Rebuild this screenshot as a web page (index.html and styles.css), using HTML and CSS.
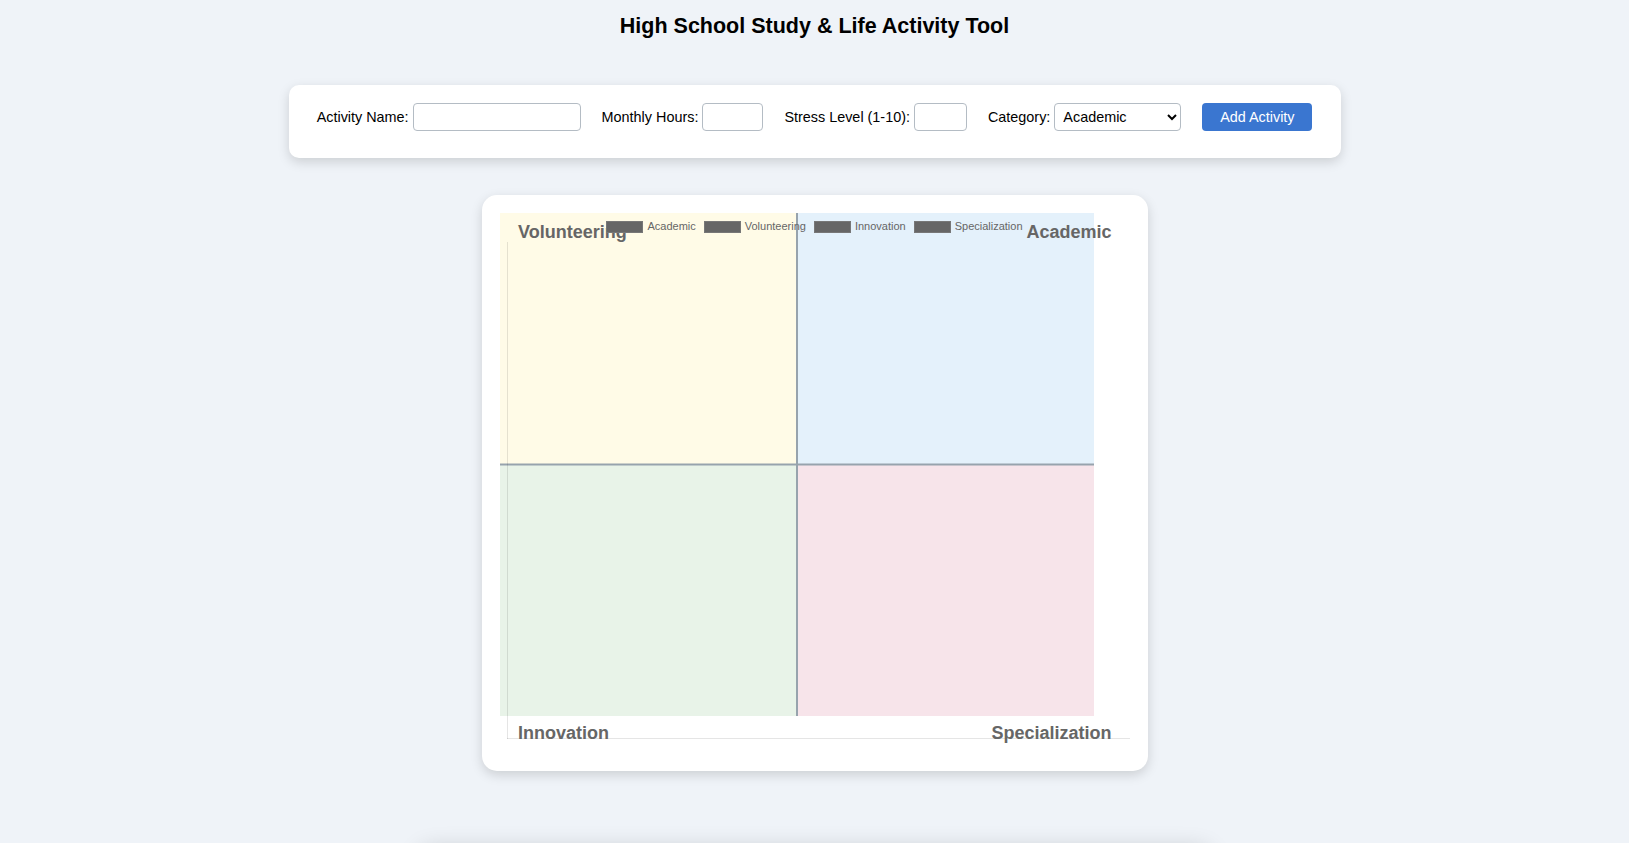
FILE: index.html
```html
<!DOCTYPE html>
<html lang="en">
<head>
<meta charset="utf-8">
<title>High School Study &amp; Life Activity Tool</title>
<link rel="stylesheet" href="styles.css">
</head>
<body>
<h1 class="title">High School Study &amp; Life Activity Tool</h1>

<section class="card form-card">
  <form class="activity-form" onsubmit="return false;">
    <div class="field">
      <label for="name">Activity Name:</label>
      <input id="name" class="input input-name" type="text">
    </div>
    <div class="field">
      <label for="hours">Monthly Hours:</label>
      <input id="hours" class="input input-hours" type="text">
    </div>
    <div class="field">
      <label for="stress">Stress Level (1-10):</label>
      <input id="stress" class="input input-stress" type="text">
    </div>
    <div class="field">
      <label for="cat">Category:</label>
      <select id="cat" class="select">
        <option>Academic</option>
        <option>Volunteering</option>
        <option>Innovation</option>
        <option>Specialization</option>
      </select>
    </div>
    <button class="btn" type="button">Add Activity</button>
  </form>
</section>

<section class="card chart-card">
  <div class="chart">
    <svg class="chart-svg" width="630" height="540" viewBox="0 0 630 540" xmlns="http://www.w3.org/2000/svg">
      <rect x="0" y="0" width="297" height="251.5" fill="#fffbe7"/>
      <rect x="297" y="0" width="297" height="251.5" fill="#e4f1fb"/>
      <rect x="0" y="251.5" width="297" height="251.5" fill="#e8f3e8"/>
      <rect x="297" y="251.5" width="297" height="251.5" fill="#f7e4ea"/>
      <line x1="297" y1="0" x2="297" y2="503" stroke="#97a3ad" stroke-width="2"/>
      <line x1="0" y1="251.5" x2="594" y2="251.5" stroke="#97a3ad" stroke-width="2"/>
      <line x1="7.5" y1="29" x2="7.5" y2="526" stroke="rgba(0,0,0,0.1)" stroke-width="1"/>
      <line x1="7" y1="525.5" x2="630" y2="525.5" stroke="rgba(0,0,0,0.1)" stroke-width="1"/>
      <text class="qlabel" x="18" y="24.5">Volunteering</text>
      <text class="qlabel" x="611.5" y="24.5" text-anchor="end">Academic</text>
      <text class="qlabel" x="18" y="526">Innovation</text>
      <text class="qlabel" x="611.5" y="526" text-anchor="end">Specialization</text>
    </svg>
    <ul class="legend">
      <li class="legend-item"><span class="legend-box"></span>Academic</li>
      <li class="legend-item"><span class="legend-box"></span>Volunteering</li>
      <li class="legend-item"><span class="legend-box"></span>Innovation</li>
      <li class="legend-item"><span class="legend-box"></span>Specialization</li>
    </ul>
  </div>
</section>

<section class="card list-card"></section>
</body>
</html>
```

FILE: styles.css
```css
html, body {
  margin: 0;
  padding: 0;
}

body {
  background: #eff3f8;
  font-family: "Liberation Sans", Arial, Helvetica, sans-serif;
  color: #000;
  padding: 15px 0 40px;
}

.title {
  margin: 0;
  font-size: 21.5px;
  line-height: 23px;
  font-weight: bold;
  text-align: center;
}

.card {
  background: #fff;
  border-radius: 10px;
  box-shadow: 0 4px 12px rgba(0, 0, 0, 0.15);
  margin-left: auto;
  margin-right: auto;
}

.form-card {
  width: 1052px;
  height: 73px;
  box-sizing: border-box;
  margin-top: 47px;
  padding-top: 18px;
}

.activity-form {
  display: flex;
  justify-content: center;
  align-items: center;
  gap: 21px;
}

.field {
  display: flex;
  align-items: center;
  gap: 4px;
  font-size: 14.4px;
}

.input,
.select {
  box-sizing: border-box;
  height: 28px;
  border: 1px solid #b4bcc4;
  border-radius: 4px;
  background: #fff;
  font-family: inherit;
  font-size: 14.4px;
  padding: 0 8px;
}

.input-name { width: 168px; }
.input-hours { width: 61px; }
.input-stress { width: 53px; }
.select { width: 127px; padding: 0 4px; color: #000; }

.btn {
  box-sizing: border-box;
  width: 110px;
  height: 28px;
  border: none;
  border-radius: 4px;
  background: #3a76d0;
  color: #fff;
  font-family: inherit;
  font-size: 14.4px;
  padding: 0;
}

.chart-card {
  width: 666px;
  height: 576px;
  box-sizing: border-box;
  margin-top: 37px;
  padding: 18px;
  border-radius: 15px;
}

.chart {
  position: relative;
  width: 630px;
  height: 540px;
}

.chart-svg {
  display: block;
}

.qlabel {
  font-family: "Liberation Sans", Arial, sans-serif;
  font-size: 18px;
  font-weight: bold;
  fill: #666;
}

.legend {
  position: absolute;
  top: 7px;
  left: 0;
  right: 0;
  margin: 0;
  padding: 0;
  list-style: none;
  display: flex;
  justify-content: center;
  gap: 8px;
  font-size: 11px;
  line-height: 13px;
  color: #666;
}

.legend-item {
  display: flex;
  align-items: center;
  gap: 4px;
}

.legend-box {
  display: inline-block;
  width: 37px;
  height: 12px;
  box-sizing: border-box;
  background: #666;
  border: 1px solid #777;
}

.list-card {
  width: 790px;
  height: 300px;
  margin-top: 75px;
  box-shadow: 0 4px 24px rgba(0, 0, 0, 0.2);
}
```
